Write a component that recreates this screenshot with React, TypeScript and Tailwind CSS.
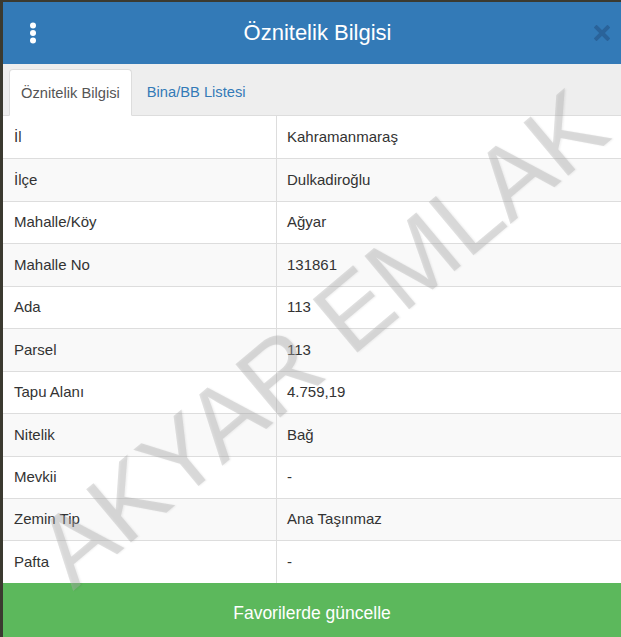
import React from 'react'

const rows: [string, string][] = [
  ['İl', 'Kahramanmaraş'],
  ['İlçe', 'Dulkadiroğlu'],
  ['Mahalle/Köy', 'Ağyar'],
  ['Mahalle No', '131861'],
  ['Ada', '113'],
  ['Parsel', '113'],
  ['Tapu Alanı', '4.759,19'],
  ['Nitelik', 'Bağ'],
  ['Mevkii', '-'],
  ['Zemin Tip', 'Ana Taşınmaz'],
  ['Pafta', '-'],
]

function KebabIcon() {
  return (
    <svg width="12" height="24" viewBox="0 0 12 24" className="block">
      <circle cx="6" cy="4.5" r="3" fill="#fff" />
      <circle cx="6" cy="12" r="3" fill="#fff" />
      <circle cx="6" cy="19.5" r="3" fill="#fff" />
    </svg>
  )
}

function CloseIcon() {
  return (
    <svg width="16" height="16" viewBox="0 0 16 16" className="block">
      <path d="M2.5 2.5 L13.5 13.5 M13.5 2.5 L2.5 13.5" stroke="#2a639a" strokeWidth="4" strokeLinecap="square" />
    </svg>
  )
}

export default function App() {
  return (
    <div
      className="w-[621px] h-[637px] overflow-hidden bg-[#3b3a30] pl-[3px] pt-[2px]"
      style={{ fontFamily: '"Liberation Sans", Arial, sans-serif' }}
    >
      <div className="relative flex flex-col h-[635px] bg-white text-[#333]">
        {/* header */}
        <div className="flex items-center h-[62px] bg-[#337ab7] px-[24px]">
          <div className="w-[12px]">
            <KebabIcon />
          </div>
          <h1 className="flex-1 text-center text-white text-[22px] leading-none pl-[2px]">Öznitelik Bilgisi</h1>
          <div className="w-[16px] -mr-[13px]">
            <CloseIcon />
          </div>
        </div>

        {/* tabs */}
        <div className="flex items-end h-[52px] bg-[#eeeeee] pl-[6px] border-b border-[#dddddd]">
          <div className="h-[47px] -mb-px flex items-center pt-[2px] px-[11px] bg-white border border-[#dddddd] border-b-white rounded-t-[4px] text-[14.7px] text-[#555]">
            Öznitelik Bilgisi
          </div>
          <div className="h-[47px] flex items-center pt-[2px] pl-[15px] text-[14.7px] text-[#337ab7]">Bina/BB Listesi</div>
        </div>

        {/* table */}
        <div className="flex flex-col">
          {rows.map(([k, v], i) => (
            <div
              key={k}
              className={`flex h-[42.45px] text-[15px] ${i > 0 ? 'border-t border-[#dddddd]' : ''} ${i % 2 === 1 ? 'bg-[#f9f9f9]' : 'bg-white'}`}
            >
              <div className="w-[274px] flex items-center pl-[11px] border-r border-[#dddddd]">{k}</div>
              <div className="flex-1 flex items-center pl-[10px]">{v}</div>
            </div>
          ))}
        </div>

        {/* button */}
        <div className="flex-1 flex items-center justify-center bg-[#5cb85c] text-white text-[17.5px] pt-[6px]">
          Favorilerde güncelle
        </div>

        {/* watermark */}
        <span className="pointer-events-none absolute left-[318px] top-[336px] -translate-x-1/2 -translate-y-1/2 -rotate-[40deg] whitespace-nowrap text-[101px] leading-none text-[rgba(175,175,175,0.38)] [text-shadow:1px_1px_2px_rgba(0,0,0,0.06)]">
          AKYAR EMLAK
        </span>
      </div>
    </div>
  )
}
